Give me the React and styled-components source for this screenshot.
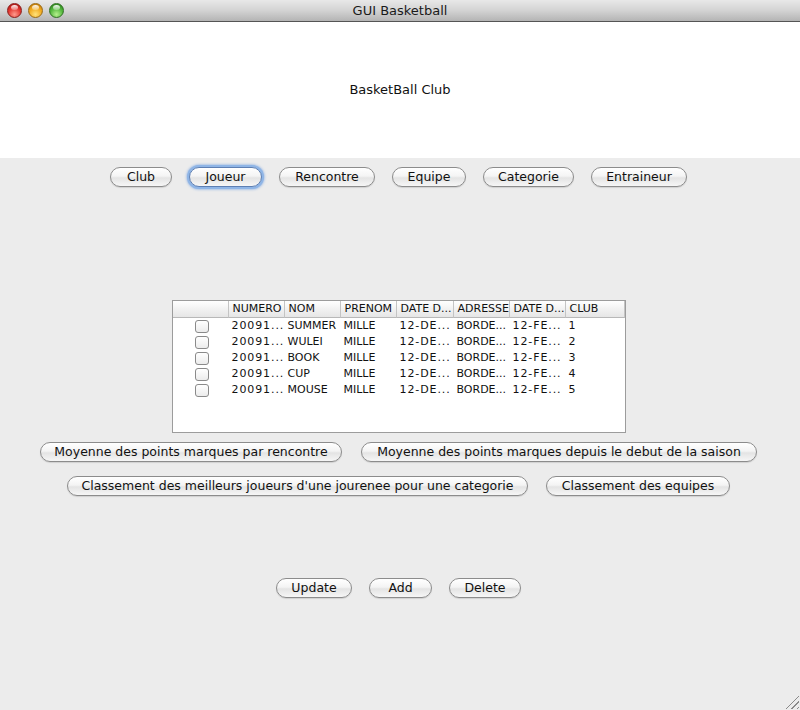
import React from 'react';
import styled, { createGlobalStyle } from 'styled-components';

const GlobalStyle = createGlobalStyle`
    html, body {
        margin: 0;
        padding: 0;
        background: #ececec;
    }
    * {
        box-sizing: border-box;
    }
`;

const Window = styled.div`
    width: 800px;
    height: 710px;
    display: flex;
    flex-direction: column;
    background: #ececec;
    font-family: "DejaVu Sans", "Liberation Sans", sans-serif;
    color: #111;
    overflow: hidden;
`;

const TitleBar = styled.div`
    height: 22px;
    flex: 0 0 22px;
    display: flex;
    align-items: center;
    position: relative;
    background: linear-gradient(#e8e8e8, #d3d3d3 50%, #b4b4b4);
    border-bottom: 1px solid #555;
`;

const Lights = styled.div`
    display: flex;
    gap: 6px;
    padding-left: 7px;
    position: relative;
    z-index: 1;
`;

const Light = styled.span`
    width: 15px;
    height: 15px;
    border-radius: 50%;
    border: 1px solid ${p => p.$edge};
    background: radial-gradient(circle at 50% 80%, ${p => p.$glow} 0%, ${p => p.$base} 55%, ${p => p.$dark} 100%);
    position: relative;
    &::after {
        content: '';
        position: absolute;
        left: 3px;
        top: 1px;
        width: 7px;
        height: 5px;
        border-radius: 50%;
        background: linear-gradient(rgba(255, 255, 255, 0.95), rgba(255, 255, 255, 0.3));
    }
`;

const Title = styled.div`
    position: absolute;
    left: 0;
    right: 0;
    text-align: center;
    font-size: 13px;
    color: #1a1a1a;
`;

const Banner = styled.div`
    height: 136px;
    flex: 0 0 136px;
    background: #fff;
    display: flex;
    align-items: center;
    justify-content: center;
    font-size: 13px;
    padding-bottom: 1px;
`;

const Body = styled.div`
    flex: 1;
    display: flex;
    flex-direction: column;
    position: relative;
`;

const ButtonRow = styled.div`
    display: flex;
    justify-content: center;
    gap: ${p => p.$gap || 17}px;
    margin-top: ${p => p.$top}px;
    padding-right: 3px;
`;

const PillButton = styled.button`
    width: ${p => p.$w}px;
    height: 20px;
    padding: 0;
    border-radius: 10px;
    border: 1px solid ${p => (p.$focus ? '#5d7fb3' : '#8c8c8c')};
    background: linear-gradient(#ffffff, #f4f4f4 45%, #e4e4e4 55%, #f6f6f6);
    font-family: "DejaVu Sans", "Liberation Sans", sans-serif;
    font-size: 12.5px;
    color: #111;
    line-height: 18px;
    box-shadow: ${p => (p.$focus ? '0 0 0 2px #8fb5e6, 0 0 3px 2px #6f9ee0' : '0 1px 1px rgba(0,0,0,0.12)')};
`;

const TableWrap = styled.div`
    align-self: center;
    margin-top: 113px;
    margin-left: -3px;
    width: 454px;
    height: 133px;
    border: 1px solid #9c9c9c;
    background: #fff;
    font-size: 11px;
`;

const Grid = styled.div`
    display: grid;
    grid-template-columns: 56px 56px 56px 56px 57px 56px 56px 59px;
`;

const HeadCell = styled.div`
    height: 17px;
    line-height: 16px;
    padding-left: 4px;
    background: linear-gradient(#ffffff, #f2f2f2 50%, #e6e6e6);
    border-bottom: 1px solid #b8b8b8;
    border-right: 1px solid #c4c4c4;
    white-space: nowrap;
    overflow: hidden;
    &:last-child {
        border-right: none;
    }
`;

const Cell = styled.div`
    height: 16px;
    line-height: 16px;
    padding-left: 3px;
    font-size: 11px;
    letter-spacing: ${p => (p.$wide ? '0.9px' : '0')};
    white-space: nowrap;
    overflow: hidden;
    display: flex;
    align-items: center;
    justify-content: ${p => (p.$center ? 'center' : 'flex-start')};
`;

const Check = styled.span`
    width: 14px;
    height: 13px;
    margin-right: 1px;
    border: 1px solid #8a8a8a;
    border-radius: 3px;
    background: linear-gradient(#ffffff, #ececec);
`;

const Grip = styled.div`
    position: absolute;
    right: 1px;
    bottom: 1px;
    width: 14px;
    height: 14px;
    background: repeating-linear-gradient(135deg, transparent 0 2px, #8a8a8a 2px 3px, transparent 3px 4px);
    clip-path: polygon(100% 0, 100% 100%, 0 100%);
`;

const navButtons = [
    ['Club', 62],
    ['Joueur', 73],
    ['Rencontre', 96],
    ['Equipe', 74],
    ['Categorie', 91],
    ['Entraineur', 96],
];

const headers = ['', 'NUMERO', 'NOM', 'PRENOM', 'DATE D...', 'ADRESSE', 'DATE D...', 'CLUB'];

const players = [
    ['SUMMER', 1],
    ['WULEI', 2],
    ['BOOK', 3],
    ['CUP', 4],
    ['MOUSE', 5],
];

export default function App() {
    return (
        <>
            <GlobalStyle />
            <Window>
                <TitleBar>
                    <Lights>
                        <Light $base="#e2332c" $glow="#ff9a8c" $dark="#9c1010" $edge="#8a1d1a" />
                        <Light $base="#f0a81c" $glow="#ffe27a" $dark="#b06a00" $edge="#9a6a14" />
                        <Light $base="#4fb43a" $glow="#b5f08c" $dark="#247414" $edge="#2f6f22" />
                    </Lights>
                    <Title>GUI Basketball</Title>
                </TitleBar>
                <Banner>BasketBall Club</Banner>
                <Body>
                    <ButtonRow $top={9}>
                        {navButtons.map(([label, w]) => (
                            <PillButton key={label} $w={w} $focus={label === 'Joueur'}>
                                {label}
                            </PillButton>
                        ))}
                    </ButtonRow>

                    <TableWrap>
                        <Grid>
                            {headers.map((h, i) => (
                                <HeadCell key={i}>{h}</HeadCell>
                            ))}
                            {players.map(([nom, club]) => (
                                <React.Fragment key={nom}>
                                    <Cell $center>
                                        <Check />
                                    </Cell>
                                    <Cell $wide>20091...</Cell>
                                    <Cell>{nom}</Cell>
                                    <Cell>MILLE</Cell>
                                    <Cell $wide>12-DE...</Cell>
                                    <Cell>BORDE...</Cell>
                                    <Cell $wide>12-FE...</Cell>
                                    <Cell>{club}</Cell>
                                </React.Fragment>
                            ))}
                        </Grid>
                    </TableWrap>

                    <ButtonRow $top={9} $gap={19}>
                        <PillButton $w={302}>Moyenne des points marques par rencontre</PillButton>
                        <PillButton $w={396}>Moyenne des points marques depuis le debut de la saison</PillButton>
                    </ButtonRow>
                    <ButtonRow $top={14} $gap={18}>
                        <PillButton $w={461}>Classement des meilleurs joueurs d'une jourenee pour une categorie</PillButton>
                        <PillButton $w={184}>Classement des equipes</PillButton>
                    </ButtonRow>

                    <ButtonRow $top={82}>
                        <PillButton $w={76}>Update</PillButton>
                        <PillButton $w={63}>Add</PillButton>
                        <PillButton $w={72}>Delete</PillButton>
                    </ButtonRow>
                    <Grip />
                </Body>
            </Window>
        </>
    );
}
